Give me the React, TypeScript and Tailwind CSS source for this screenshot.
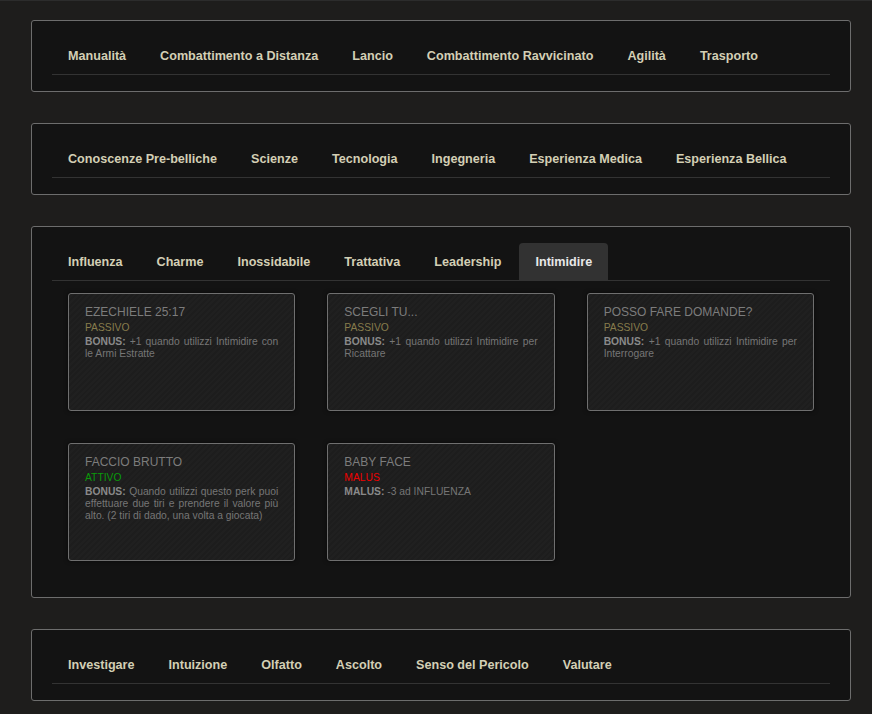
import React from "react";

interface Perk {
  title: string;
  kind: "PASSIVO" | "ATTIVO" | "MALUS";
  label: string;
  text: string;
}

const groups: { tabs: string[]; active?: string; perks?: Perk[] }[] = [
  {
    tabs: [
      "Manualità",
      "Combattimento a Distanza",
      "Lancio",
      "Combattimento Ravvicinato",
      "Agilità",
      "Trasporto",
    ],
  },
  {
    tabs: [
      "Conoscenze Pre-belliche",
      "Scienze",
      "Tecnologia",
      "Ingegneria",
      "Esperienza Medica",
      "Esperienza Bellica",
    ],
  },
  {
    tabs: ["Influenza", "Charme", "Inossidabile", "Trattativa", "Leadership", "Intimidire"],
    active: "Intimidire",
    perks: [
      {
        title: "EZECHIELE 25:17",
        kind: "PASSIVO",
        label: "BONUS:",
        text: "+1 quando utilizzi Intimidire con le Armi Estratte",
      },
      {
        title: "SCEGLI TU...",
        kind: "PASSIVO",
        label: "BONUS:",
        text: "+1 quando utilizzi Intimidire per Ricattare",
      },
      {
        title: "POSSO FARE DOMANDE?",
        kind: "PASSIVO",
        label: "BONUS:",
        text: "+1 quando utilizzi Intimidire per Interrogare",
      },
      {
        title: "FACCIO BRUTTO",
        kind: "ATTIVO",
        label: "BONUS:",
        text: "Quando utilizzi questo perk puoi effettuare due tiri e prendere il valore più alto. (2 tiri di dado, una volta a giocata)",
      },
      {
        title: "BABY FACE",
        kind: "MALUS",
        label: "MALUS:",
        text: "-3 ad INFLUENZA",
      },
    ],
  },
  {
    tabs: ["Investigare", "Intuizione", "Olfatto", "Ascolto", "Senso del Pericolo", "Valutare"],
  },
];

const kindColor: Record<Perk["kind"], string> = {
  PASSIVO: "text-[#877c4c]",
  ATTIVO: "text-[#0a9a0a]",
  MALUS: "text-[#ee0000]",
};

const PerkCard = ({ perk }: { perk: Perk }) => (
  <div className="h-[118px] rounded-[3px] border border-[#6f6f6f] bg-[#1e1e1e] bg-[repeating-linear-gradient(135deg,#1d1d1d_0px,#1d1d1d_2px,#202020_2px,#202020_4px)] px-4 pt-[10px] shadow-[0_0_4px_rgba(0,0,0,0.6)]">
    <div className="text-[12px] leading-[16px] text-[#7c7c7c]">{perk.title}</div>
    <div className={`mt-[2px] text-[10.3px] leading-[12px] ${kindColor[perk.kind]}`}>{perk.kind}</div>
    <p className="mt-[2px] text-justify text-[10.3px] leading-[12px] text-[#767676]">
      <span className="font-bold text-[#8a8a8a]">{perk.label}</span> {perk.text}
    </p>
  </div>
);

export default function App() {
  return (
    <div
      className="min-h-screen border-t border-[#2c2c2c] bg-[#1e1d1c] pt-[19px] pb-[13px]"
      style={{ fontFamily: '"Liberation Sans", Arial, sans-serif' }}
    >
      <div className="ml-[31px] flex w-[820px] flex-col gap-[31px]">
        {groups.map((group, gi) => (
          <section
            key={gi}
            className="rounded-[3px] border border-[#6d6d6d] bg-[#131313] px-5 pt-4 pb-4"
          >
            <ul className="flex border-b border-[#333333]">
              {group.tabs.map((tab) => (
                <li
                  key={tab}
                  className={`mr-[2px] rounded-t-[4px] px-4 pt-[11px] pb-[10px] text-[12.6px] font-bold leading-[16px] ${
                    tab === group.active
                      ? "bg-[#323232] text-[#e8e8e8]"
                      : "text-[#d3cfb5]"
                  }`}
                >
                  {tab}
                </li>
              ))}
            </ul>
            {group.perks && (
              <div className="grid grid-cols-3 gap-x-8 gap-y-8 px-4 pt-3 pb-5">
                {group.perks.map((perk) => (
                  <PerkCard key={perk.title} perk={perk} />
                ))}
              </div>
            )}
          </section>
        ))}
      </div>
    </div>
  );
}
